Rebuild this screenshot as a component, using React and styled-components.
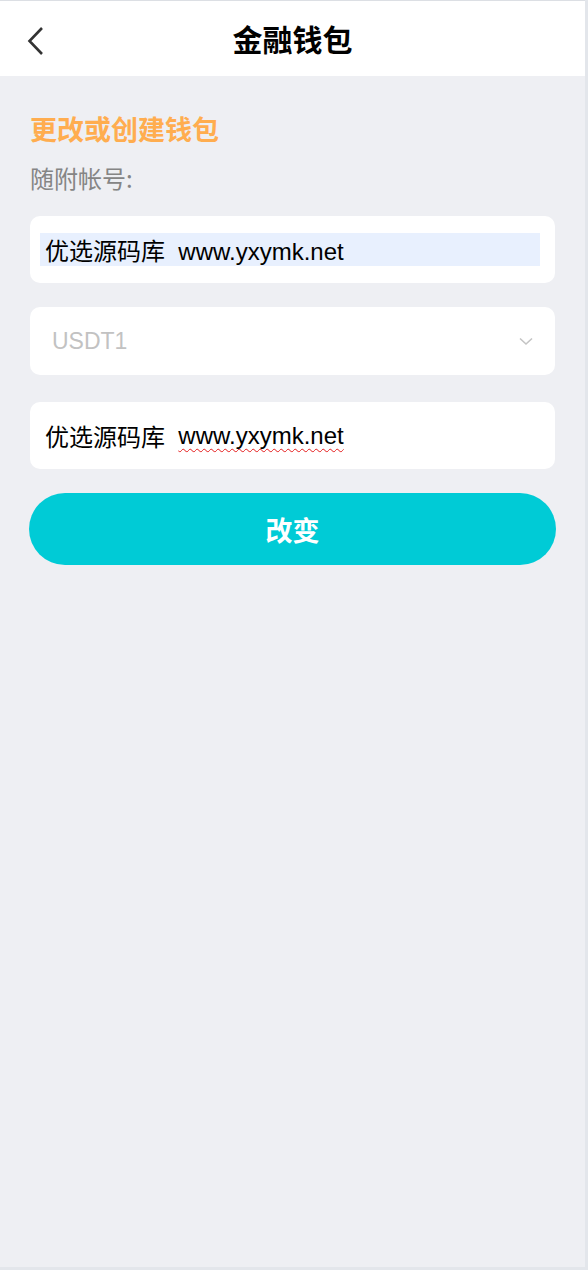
import React from "react";
import styled, { createGlobalStyle } from "styled-components";

const Global = createGlobalStyle`
  html, body {
    margin: 0;
    padding: 0;
    background: #e3e6eb;
  }
  body {
    font-family: "Liberation Sans", "Noto Sans CJK SC", sans-serif;
  }
`;

const Page = styled.div`
  width: 585px;
  height: 1266px;
  border-top: 1px solid #dcdfe4;
  background: #eeeff3;
  display: flex;
  flex-direction: column;
`;

const Header = styled.header`
  height: 75px;
  background: #fff;
  display: flex;
  align-items: center;
  justify-content: center;
  position: relative;
`;

const Back = styled.button`
  position: absolute;
  left: 22px;
  top: 22px;
  width: 26px;
  height: 36px;
  border: 0;
  padding: 0;
  background: none;
  display: flex;
  align-items: center;
  justify-content: center;
`;

const Title = styled.h1`
  margin: 0 0 2px;
  font-family: "Noto Sans CJK SC", sans-serif;
  font-size: 30px;
  font-weight: 700;
  color: #000;
`;

const Body = styled.main`
  padding: 35px 30px 0 30px;
  display: flex;
  flex-direction: column;
`;

const Heading = styled.h2`
  margin: 0;
  font-family: "Noto Sans CJK SC", sans-serif;
  font-size: 27px;
  font-weight: 700;
  color: #ffad4f;
  line-height: 36px;
`;

const Label = styled.div`
  margin-top: 14px;
  font-family: "Noto Sans CJK SC", sans-serif;
  font-size: 24px;
  color: #858585;
  line-height: 34px;
`;

const Card = styled.div`
  margin-top: ${(p) => p.$gap}px;
  height: ${(p) => p.$h || 67}px;
  background: #fff;
  border-radius: 10px;
  display: flex;
  align-items: center;
  padding: 0 15px 0 10px;
`;

const Field = styled.div`
  flex: 1;
  height: 33px;
  display: flex;
  align-items: center;
  padding-left: 5px;
  background: ${(p) => (p.$autofill ? "#e8f0fe" : "transparent")};
  font-size: 24px;
  color: #000;
  white-space: pre;
`;

const Misspelled = styled.span`
  text-decoration: underline wavy #e41b1b;
  text-decoration-thickness: 1.2px;
  text-decoration-skip-ink: none;
  text-underline-offset: 4px;
`;

const Select = styled.div`
  flex: 1;
  display: flex;
  align-items: center;
  justify-content: space-between;
  padding: 0 7px 0 12px;
  font-size: 23px;
  color: #c2c2c2;
`;

const Button = styled.button`
  margin: 24px -1px 0;
  height: 72px;
  border: 0;
  border-radius: 36px;
  background: #00cbd6;
  color: #fff;
  font-family: "Noto Sans CJK SC", sans-serif;
  font-size: 27px;
  font-weight: 700;
`;

function Chevron() {
  return (
    <svg width="18" height="30" viewBox="0 0 18 30">
      <path d="M16 2 L3.5 15 L16 28" fill="none" stroke="#333" strokeWidth="2.6" />
    </svg>
  );
}

function Caret() {
  return (
    <svg width="14" height="9" viewBox="0 0 14 9">
      <path d="M1 1.5 L7 7 L13 1.5" fill="none" stroke="#c4c4c4" strokeWidth="1.6" />
    </svg>
  );
}

export default function App() {
  return (
    <>
      <Global />
      <Page>
        <Header>
          <Back>
            <Chevron />
          </Back>
          <Title>金融钱包</Title>
        </Header>
        <Body>
          <Heading>更改或创建钱包</Heading>
          <Label>随附帐号:</Label>
          <Card $gap={21}>
            <Field $autofill>优选源码库  www.yxymk.net</Field>
          </Card>
          <Card $gap={24} $h={68}>
            <Select>
              USDT1
              <Caret />
            </Select>
          </Card>
          <Card $gap={27}>
            <Field>
              优选源码库  <Misspelled>www.yxymk.net</Misspelled>
            </Field>
          </Card>
          <Button>改变</Button>
        </Body>
      </Page>
    </>
  );
}
